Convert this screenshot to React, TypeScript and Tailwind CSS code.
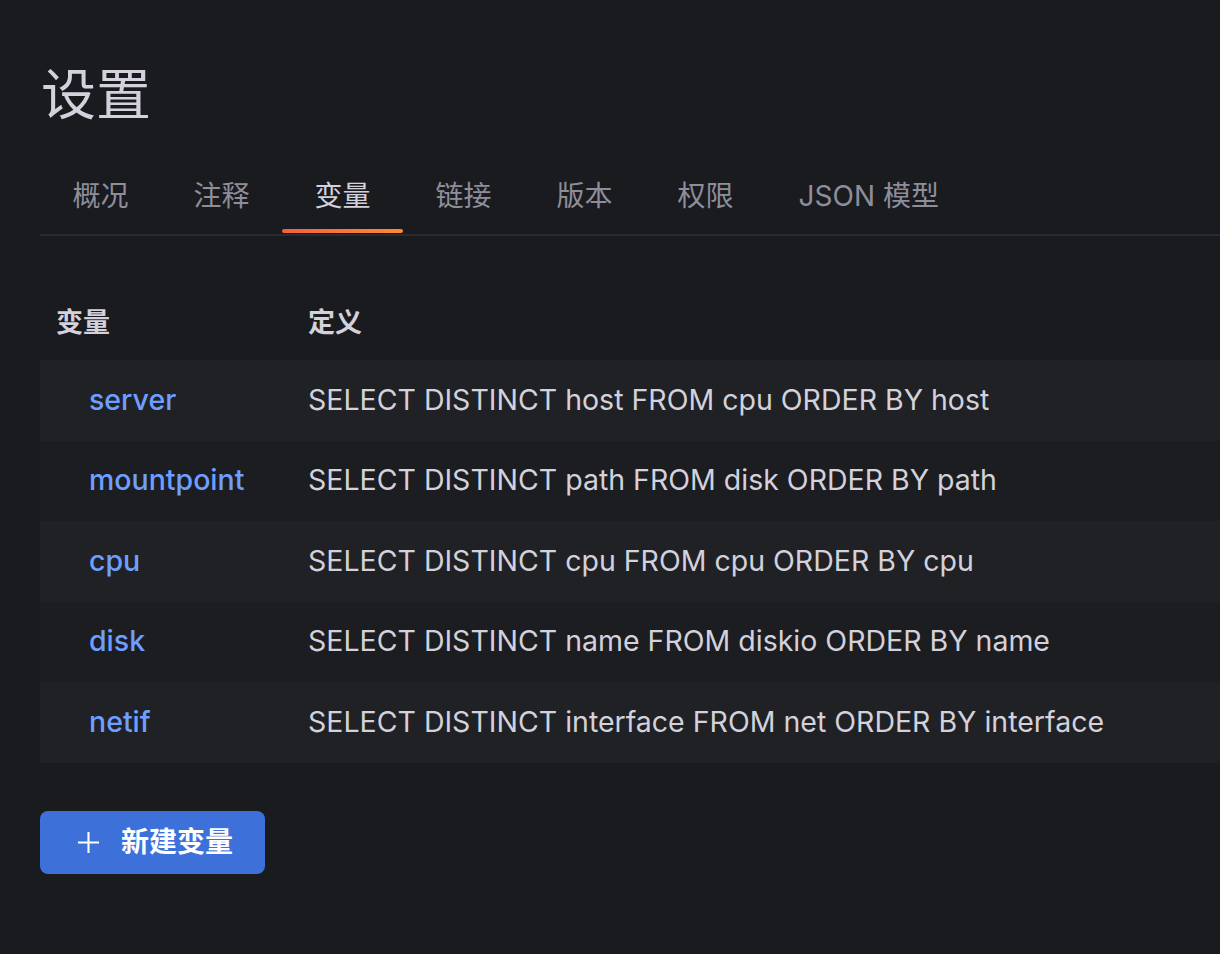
import React from 'react';

const tabs = ['概况', '注释', '变量', '链接', '版本', '权限', 'JSON 模型'];

const variables = [
  { name: 'server', query: 'SELECT DISTINCT host FROM cpu ORDER BY host' },
  { name: 'mountpoint', query: 'SELECT DISTINCT path FROM disk ORDER BY path' },
  { name: 'cpu', query: 'SELECT DISTINCT cpu FROM cpu ORDER BY cpu' },
  { name: 'disk', query: 'SELECT DISTINCT name FROM diskio ORDER BY name' },
  { name: 'netif', query: 'SELECT DISTINCT interface FROM net ORDER BY interface' },
];

export default function App() {
  const active = '变量';

  return (
    <div
      className="min-h-screen w-full bg-[#1a1b1f] text-[#ccccdc] overflow-hidden"
      style={{ fontFamily: 'Inter, "Noto Sans CJK SC", sans-serif' }}
    >
      <div className="pl-[40px] pt-[58px]">
        {/* Title */}
        <h1 className="text-[55px] leading-[72px] font-normal text-[#d2d1dc] pl-[1px]">设置</h1>

        {/* Tabs */}
        <div className="mt-[32px] flex border-b-2 border-[#2a2b30]">
          {tabs.map((tab) => {
            const isActive = tab === active;
            return (
              <div
                key={tab}
                className={`relative px-[32.5px] h-[72px] pb-[4px] flex items-center text-[28px] ${
                  isActive ? 'text-[#d2d1dc]' : 'text-[#8e8e9a]'
                }`}
              >
                {tab}
                {isActive && (
                  <span className="absolute left-0 right-0 bottom-[1px] h-[4px] rounded-full bg-gradient-to-r from-[#f55f3e] to-[#ff8833]" />
                )}
              </div>
            );
          })}
        </div>

        {/* Table */}
        <div className="mt-[50px]">
          <div className="flex h-[74px] items-center text-[27px] font-semibold text-[#d2d1dc]">
            <div className="w-[268px] pl-[16px]">变量</div>
            <div>定义</div>
          </div>
          {variables.map((v, i) => (
            <div
              key={v.name}
              className={`flex h-[80.5px] items-center text-[28.5px] ${
                i % 2 === 0 ? 'bg-[#202125]' : 'bg-[#1c1d21]'
              }`}
            >
              <div className="w-[268px] pl-[49px] text-[#6e9fff] font-medium">{v.name}</div>
              <div className="text-[#d2d1dc] whitespace-nowrap">{v.query}</div>
            </div>
          ))}
        </div>

        {/* Button */}
        <button className="mt-[48px] flex items-center h-[63px] pl-[37px] pr-[32px] rounded-[8px] bg-[#3d71d9] text-white text-[28px] font-semibold">
          <svg width="23" height="23" viewBox="0 0 24 24" className="mr-[21px]" fill="none" stroke="currentColor" strokeWidth="2.2">
            <path d="M12 1v22M1 12h22" />
          </svg>
          新建变量
        </button>
      </div>
    </div>
  );
}
